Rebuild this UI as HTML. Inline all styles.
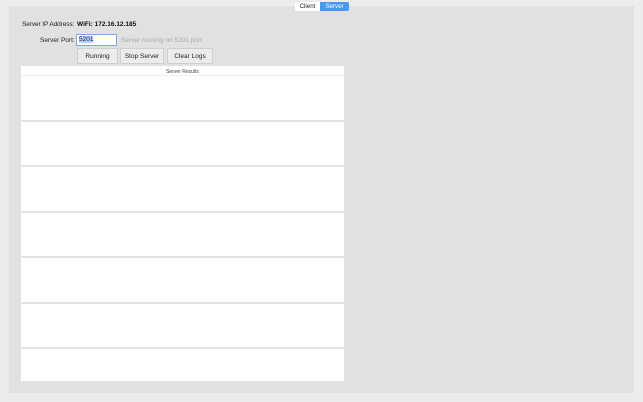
<!DOCTYPE html><html><head><style>
*{margin:0;padding:0;box-sizing:border-box}
body{width:643px;height:402px;background:#ececec;position:relative;overflow:hidden;font-family:"Liberation Sans",sans-serif;font-size:6.5px;color:#222}
.p{position:absolute;left:9px;top:6px;width:625px;height:387px;background:#e1e1e1}
.a{position:absolute;white-space:nowrap}
.seg{position:absolute;top:2px;height:9px;font-size:6.2px;line-height:9px;text-align:center}
.btn{position:absolute;top:48px;height:16px;background:#ececec;border:1px solid #cfcfcf;font-size:6.5px;line-height:15px;text-align:center}
.tbl{position:absolute;left:21px;top:66px;width:323px;height:315px;background:#fff}
.r{position:absolute;left:0;width:323px;height:1.5px;background:#e4e4e4}
</style></head><body>
<div class="p"></div>
<div class="seg" style="left:295px;width:25px;background:#fff;color:#222;border-radius:2px 0 0 2px">Client</div>
<div class="seg" style="left:320px;width:29px;background:#4a97f5;color:#fff;border-radius:0 2px 2px 0">Server</div>
<div class="a" style="left:22px;top:21px;letter-spacing:-0.1px">Server IP Address:</div>
<div class="a" style="left:77px;top:21px;font-weight:bold;color:#111">WiFi: 172.16.12.185</div>
<div class="a" style="left:40px;top:37px">Server Port:</div>
<div class="a" style="left:76px;top:34px;width:41px;height:12px;background:#fff;border:1.5px solid #7aa8e6;padding-left:2px;line-height:9.5px"><span style="background:#b5d3fb">5201</span></div>
<div class="a" style="left:121px;top:37px;color:#aaa">Server running on 5201 port</div>
<div class="btn" style="left:77px;width:41px">Running</div>
<div class="btn" style="left:120px;width:44px">Stop Server</div>
<div class="btn" style="left:167px;width:46px">Clear Logs</div>
<div class="tbl">
<div class="a" style="left:0;width:323px;text-align:center;top:2.5px;font-size:5px;color:#444">Server Results</div>
<div class="r" style="top:9px;height:1px;background:#eee"></div>
<div class="r" style="top:54px"></div><div class="r" style="top:99px"></div><div class="r" style="top:145px"></div><div class="r" style="top:190px"></div><div class="r" style="top:236px"></div><div class="r" style="top:281px"></div>
</div>
</body></html>
